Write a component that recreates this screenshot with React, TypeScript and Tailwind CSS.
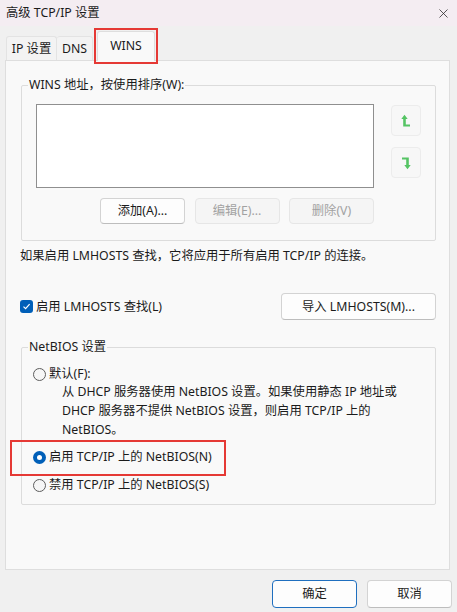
import { X } from "lucide-react";

const font = { fontFamily: '"Noto Sans", "Noto Sans CJK SC", sans-serif' };

function Button({
  label,
  disabled,
  primary,
  className = "",
}: {
  label: string;
  disabled?: boolean;
  primary?: boolean;
  className?: string;
}) {
  const look = disabled
    ? "bg-[#f5f5f5] border-[#e6e6e6] text-[#a2a2a2]"
    : primary
      ? "bg-[#fdfdfd] border-[#1f6fbf] text-[#1b1b1b]"
      : "bg-[#fdfdfd] border-[#d3d3d3] border-b-[#bdbdbd] text-[#1b1b1b]";
  return (
    <button
      type="button"
      className={`flex items-center justify-center rounded-[4px] border text-[12.3px] ${look} ${className}`}
    >
      {label}
    </button>
  );
}

function Radio({ checked, label }: { checked?: boolean; label: string }) {
  return (
    <div className="flex h-4 items-center gap-[3px]">
      {checked ? (
        <span className="flex h-[13px] w-[13px] items-center justify-center rounded-full bg-[#005fb8]">
          <span className="h-[5px] w-[5px] rounded-full bg-white" />
        </span>
      ) : (
        <span className="h-[13px] w-[13px] rounded-full border border-[#5d5d5d] bg-[#f6f6f6]" />
      )}
      <span>{label}</span>
    </div>
  );
}

function UpIcon() {
  return (
    <svg width="10" height="14" viewBox="0 0 10 14">
      <path d="M3.5 0.8 L0.3 5 H2.2 V12.6 H9 V10.4 H4.8 V5 H6.7 Z" fill="#55c464" />
    </svg>
  );
}

function DownIcon() {
  return (
    <svg width="10" height="14" viewBox="0 0 10 14">
      <path d="M1 1.4 H7.8 V9 H9.7 L6.5 13.2 L3.3 9 H5.2 V3.6 H1 Z" fill="#55c464" />
    </svg>
  );
}

export default function App() {
  return (
    <div
      className="relative flex h-[612px] w-[457px] flex-col bg-[#f0f0f0] text-[12.3px] leading-4 text-[#1b1b1b]"
      style={font}
    >
      {/* title bar */}
      <div className="flex h-[26px] items-center justify-between bg-[#f4edf2] pl-[6px] pr-[6px]">
        <span>高级 TCP/IP 设置</span>
        <X size={15} strokeWidth={1.2} className="text-[#222]" />
      </div>

      {/* tabs */}
      <div className="flex h-[34px] items-end pl-[6px]">
        <div className="flex h-[24px] w-[51px] items-center justify-center rounded-t-[3px] border border-b-0 border-[#e3e3e3] bg-[#f3f3f3]">
          IP 设置
        </div>
        <div className="flex h-[24px] w-[36px] items-center justify-center rounded-t-[3px] border border-b-0 border-l-0 border-[#e3e3e3] bg-[#f3f3f3]">
          DNS
        </div>
        <div className="relative z-10 ml-[4px] mb-[-1px] flex h-[30px] w-[58px] items-start justify-center rounded-t-[3px] border border-b-0 border-[#dedede] bg-[#f9f9f9] pt-[6px]">
          WINS
        </div>
      </div>

      {/* panel */}
      <div className="ml-[5px] flex h-[510px] w-[445px] flex-col border border-[#dedede] bg-[#f9f9f9] pl-[15px] pr-[13px]">
        <fieldset className="mt-[16px] rounded-[2px] border border-[#dcdcdc] px-0 pb-[16px]">
          <legend className="ml-[6px] px-px leading-4">WINS 地址，按使用排序(W):</legend>
          <div className="mt-[11px] ml-[14px] flex gap-[17px]">
            <div className="h-[84px] w-[338px] border border-[#8f8f8f] bg-white" />
            <div className="mt-px flex flex-col gap-[11px]">
              <div className="flex h-[31px] w-[30px] items-center justify-center rounded-[4px] border border-[#ececec] bg-[#f7f7f7]">
                <UpIcon />
              </div>
              <div className="flex h-[31px] w-[30px] items-center justify-center rounded-[4px] border border-[#ececec] bg-[#f7f7f7]">
                <DownIcon />
              </div>
            </div>
          </div>
          <div className="mt-[10px] ml-[14px] flex w-[338px] justify-end gap-[9.5px]">
            <Button label="添加(A)..." className="h-[26px] w-[85px]" />
            <Button label="编辑(E)..." disabled className="h-[26px] w-[85px]" />
            <Button label="删除(V)" disabled className="h-[26px] w-[85px]" />
          </div>
        </fieldset>

        <p className="mt-[7px] ml-[-1px]">如果启用 LMHOSTS 查找，它将应用于所有启用 TCP/IP 的连接。</p>

        <div className="mt-[29px] ml-[-1px] flex items-center justify-between">
          <div className="flex items-center gap-[3px]">
            <span className="flex h-[13px] w-[13px] items-center justify-center rounded-[3px] bg-[#005fb8]">
              <svg width="9" height="9" viewBox="0 0 9 9">
                <path d="M1.5 4.6 L3.6 6.6 L7.6 2.2" fill="none" stroke="white" strokeWidth="1.2" />
              </svg>
            </span>
            <span>启用 LMHOSTS 查找(L)</span>
          </div>
          <Button label="导入 LMHOSTS(M)..." className="h-[27px] w-[155px]" />
        </div>

        <fieldset className="mt-[19px] rounded-[2px] border border-[#dcdcdc] pb-[11px] pl-[11px]">
          <legend className="ml-[-5px] px-px leading-4">NetBIOS 设置</legend>
          <div className="mt-[11px]">
            <Radio label="默认(F):" />
          </div>
          <p className="ml-[29px] leading-[19px]">
            从 DHCP 服务器使用 NetBIOS 设置。如果使用静态 IP 地址或
            <br />
            DHCP 服务器不提供 NetBIOS 设置，则启用 TCP/IP 上的
            <br />
            NetBIOS。
          </p>
          <div className="mt-[10px]">
            <Radio checked label="启用 TCP/IP 上的 NetBIOS(N)" />
          </div>
          <div className="mt-[12px]">
            <Radio label="禁用 TCP/IP 上的 NetBIOS(S)" />
          </div>
        </fieldset>
      </div>

      {/* dialog buttons */}
      <div className="mt-[10px] flex justify-end gap-[10px] pr-[5px]">
        <Button label="确定" primary className="h-[28px] w-[85px]" />
        <Button label="取消" className="h-[28px] w-[85px]" />
      </div>

      {/* annotation boxes */}
      <div className="pointer-events-none absolute left-[94px] top-[28px] h-[36px] w-[64px] border-2 border-[#e53935]" />
      <div className="pointer-events-none absolute left-[10px] top-[440px] h-[36px] w-[216px] border-2 border-[#e53935]" />
    </div>
  );
}
